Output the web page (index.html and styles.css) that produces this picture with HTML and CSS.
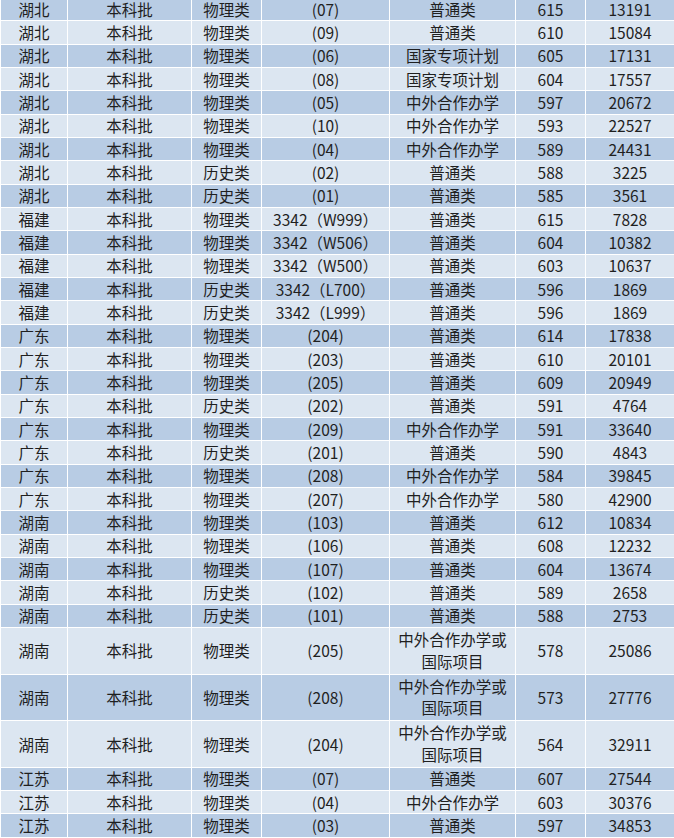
FILE: index.html
```html
<!DOCTYPE html>
<html lang="zh-CN">
<head>
<meta charset="utf-8">
<title>录取分数</title>
<link rel="stylesheet" href="styles.css">
</head>
<body>
<table class="score-table">
<colgroup>
<col class="c1"><col class="c2"><col class="c3"><col class="c4"><col class="c5"><col class="c6"><col class="c7">
</colgroup>
<tbody>
<tr><td>湖北</td><td>本科批</td><td>物理类</td><td>(07)</td><td>普通类</td><td>615</td><td>13191</td></tr>
<tr><td>湖北</td><td>本科批</td><td>物理类</td><td>(09)</td><td>普通类</td><td>610</td><td>15084</td></tr>
<tr><td>湖北</td><td>本科批</td><td>物理类</td><td>(06)</td><td>国家专项计划</td><td>605</td><td>17131</td></tr>
<tr><td>湖北</td><td>本科批</td><td>物理类</td><td>(08)</td><td>国家专项计划</td><td>604</td><td>17557</td></tr>
<tr><td>湖北</td><td>本科批</td><td>物理类</td><td>(05)</td><td>中外合作办学</td><td>597</td><td>20672</td></tr>
<tr><td>湖北</td><td>本科批</td><td>物理类</td><td>(10)</td><td>中外合作办学</td><td>593</td><td>22527</td></tr>
<tr><td>湖北</td><td>本科批</td><td>物理类</td><td>(04)</td><td>中外合作办学</td><td>589</td><td>24431</td></tr>
<tr><td>湖北</td><td>本科批</td><td>历史类</td><td>(02)</td><td>普通类</td><td>588</td><td>3225</td></tr>
<tr><td>湖北</td><td>本科批</td><td>历史类</td><td>(01)</td><td>普通类</td><td>585</td><td>3561</td></tr>
<tr><td>福建</td><td>本科批</td><td>物理类</td><td>3342（W999）</td><td>普通类</td><td>615</td><td>7828</td></tr>
<tr><td>福建</td><td>本科批</td><td>物理类</td><td>3342（W506）</td><td>普通类</td><td>604</td><td>10382</td></tr>
<tr><td>福建</td><td>本科批</td><td>物理类</td><td>3342（W500）</td><td>普通类</td><td>603</td><td>10637</td></tr>
<tr><td>福建</td><td>本科批</td><td>历史类</td><td>3342（L700）</td><td>普通类</td><td>596</td><td>1869</td></tr>
<tr><td>福建</td><td>本科批</td><td>历史类</td><td>3342（L999）</td><td>普通类</td><td>596</td><td>1869</td></tr>
<tr><td>广东</td><td>本科批</td><td>物理类</td><td>(204)</td><td>普通类</td><td>614</td><td>17838</td></tr>
<tr><td>广东</td><td>本科批</td><td>物理类</td><td>(203)</td><td>普通类</td><td>610</td><td>20101</td></tr>
<tr><td>广东</td><td>本科批</td><td>物理类</td><td>(205)</td><td>普通类</td><td>609</td><td>20949</td></tr>
<tr><td>广东</td><td>本科批</td><td>历史类</td><td>(202)</td><td>普通类</td><td>591</td><td>4764</td></tr>
<tr><td>广东</td><td>本科批</td><td>物理类</td><td>(209)</td><td>中外合作办学</td><td>591</td><td>33640</td></tr>
<tr><td>广东</td><td>本科批</td><td>历史类</td><td>(201)</td><td>普通类</td><td>590</td><td>4843</td></tr>
<tr><td>广东</td><td>本科批</td><td>物理类</td><td>(208)</td><td>中外合作办学</td><td>584</td><td>39845</td></tr>
<tr><td>广东</td><td>本科批</td><td>物理类</td><td>(207)</td><td>中外合作办学</td><td>580</td><td>42900</td></tr>
<tr><td>湖南</td><td>本科批</td><td>物理类</td><td>(103)</td><td>普通类</td><td>612</td><td>10834</td></tr>
<tr><td>湖南</td><td>本科批</td><td>物理类</td><td>(106)</td><td>普通类</td><td>608</td><td>12232</td></tr>
<tr><td>湖南</td><td>本科批</td><td>物理类</td><td>(107)</td><td>普通类</td><td>604</td><td>13674</td></tr>
<tr><td>湖南</td><td>本科批</td><td>历史类</td><td>(102)</td><td>普通类</td><td>589</td><td>2658</td></tr>
<tr><td>湖南</td><td>本科批</td><td>历史类</td><td>(101)</td><td>普通类</td><td>588</td><td>2753</td></tr>
<tr class="tall"><td>湖南</td><td>本科批</td><td>物理类</td><td>(205)</td><td class="wrap">中外合作办学或<br>国际项目</td><td>578</td><td>25086</td></tr>
<tr class="tall"><td>湖南</td><td>本科批</td><td>物理类</td><td>(208)</td><td class="wrap">中外合作办学或<br>国际项目</td><td>573</td><td>27776</td></tr>
<tr class="tall"><td>湖南</td><td>本科批</td><td>物理类</td><td>(204)</td><td class="wrap">中外合作办学或<br>国际项目</td><td>564</td><td>32911</td></tr>
<tr><td>江苏</td><td>本科批</td><td>物理类</td><td>(07)</td><td>普通类</td><td>607</td><td>27544</td></tr>
<tr><td>江苏</td><td>本科批</td><td>物理类</td><td>(04)</td><td>中外合作办学</td><td>603</td><td>30376</td></tr>
<tr><td>江苏</td><td>本科批</td><td>物理类</td><td>(03)</td><td>普通类</td><td>597</td><td>34853</td></tr>
</tbody>
</table>
</body>
</html>
```

FILE: styles.css
```css
html, body {
  margin: 0;
  padding: 0;
  background: #ffffff;
}

body {
  overflow: hidden;
}

.score-table {
  width: 674px;
  margin-top: -3px;
  border-collapse: collapse;
  table-layout: fixed;
  font-family: "Noto Sans CJK SC", "Noto Sans", sans-serif;
  font-size: 15.5px;
  color: #1f1f1f;
}

.c1 { width: 67px; }
.c2 { width: 124px; }
.c3 { width: 70px; }
.c4 { width: 128px; }
.c5 { width: 126px; }
.c6 { width: 70px; }
.c7 { width: 89px; }

.score-table tr {
  height: 23.33px;
}

.score-table tr.tall {
  height: 46.67px;
}

.score-table tr:nth-child(odd) {
  background: #b8cce4;
}

.score-table tr:nth-child(even) {
  background: #dce6f1;
}

.score-table td {
  border: 1.5px solid #ffffff;
  padding: 0;
  text-align: center;
  vertical-align: middle;
  line-height: 21px;
  white-space: nowrap;
}

.score-table td.wrap {
  line-height: 21.7px;
}
```
